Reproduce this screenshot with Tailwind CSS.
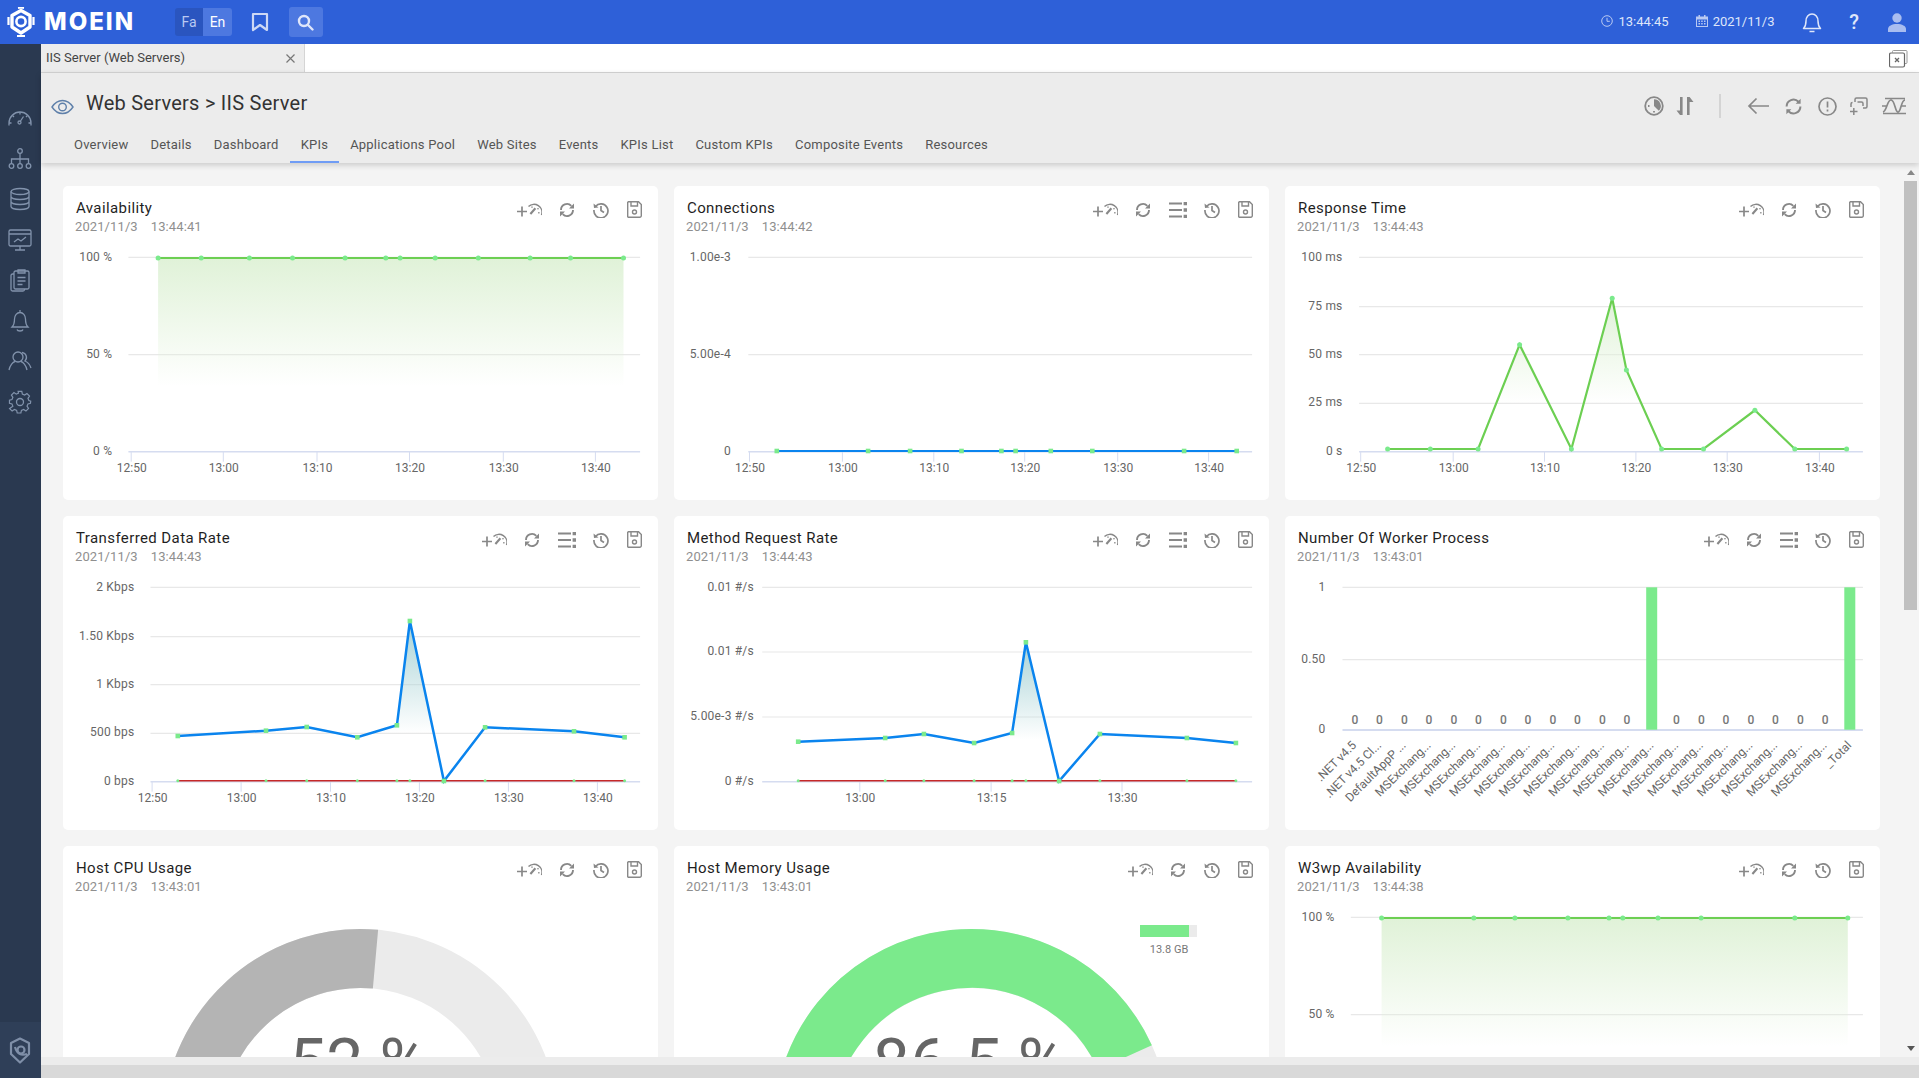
<!DOCTYPE html>
<html lang="en">
<head>
    <meta charset="UTF-8">
    <meta name="viewport" content="width=device-width, initial-scale=1.0">
    <title>Moein - IIS Server</title>
    <script src="https://cdn.jsdelivr.net/npm/@tailwindcss/browser@4"></script>
</head>
<body class="font-[Roboto,sans-serif] bg-[#f4f4f4] overflow-hidden">
<div class="h-screen flex flex-col overflow-hidden">

    <!-- Top bar -->
    <header class="h-[44px] shrink-0 bg-[#2e60d8] flex items-center pl-[7px] pr-[13px] text-[#dfe6fa]">
        <svg class="w-[28px] h-[30px] shrink-0" viewBox="0 0 28 30" fill="none" stroke="#fff">
            <path d="M14 3.5 23 8.5V20L14 26 5 20V8.5Z" stroke-width="3.4" stroke-linejoin="round"/>
            <circle cx="14" cy="14.5" r="4.6" stroke-width="2.6"/>
            <path d="M11 1 14 .5 17 1M1.5 10v8M26.5 10v8M10 29h8" stroke-width="2.2"/>
        </svg>
        <span class="ml-[9px] w-[92px] text-white font-[Inter,sans-serif] font-extrabold text-[24px] tracking-[2px] leading-none">MOEIN</span>
        <div class="ml-[39px] flex h-[28px] text-[14px] leading-[28px] text-center">
            <span class="w-[28px] bg-[#2a55bf] rounded-l-[3px] text-[#b9c9f2]">Fa</span>
            <span class="w-[29px] bg-[#4d78e0] rounded-r-[3px] text-white">En</span>
        </div>
        <svg class="ml-[19px] w-[18px] h-[20px]" viewBox="0 0 18 20" fill="none" stroke="#cdd8f5" stroke-width="2.2" stroke-linejoin="round"><path d="M2 2h14v16l-7-5-7 5z"/></svg>
        <div class="ml-[20px] w-[34px] h-[30px] bg-[#4d78e0] rounded-[3px] flex items-center justify-center pr-[2px]">
            <svg class="w-[17px] h-[17px]" viewBox="0 0 17 17" fill="none" stroke="#dfe6fa" stroke-width="2.4" stroke-linecap="round"><circle cx="7" cy="7" r="5"/><path d="M11 11l4.5 4.5"/></svg>
        </div>
        <div class="ml-auto flex items-center text-[13px]">
            <svg class="w-[12px] h-[12px] mr-[5px] -mt-[2px]" viewBox="0 0 12 12" fill="none" stroke="#b9c9f2" stroke-width="1"><circle cx="6" cy="6" r="5.3"/><path d="M6 2.8V6.300h2.800"/></svg>
            <span>13:44:45</span>
            <svg class="w-[12px] h-[12px] ml-[27px] mr-[5px] -mt-[2px]" viewBox="0 0 12 12" fill="#b9c9f2"><path d="M2.500 0h1.500v1.500H8V0h1.500v1.500H12V12H0V1.500h2.500zM1 4.500V11h10V4.500z"/><path d="M2.500 5.500h1.500V7H2.500zM5.200 5.500h1.500V7H5.200zM8 5.500h1.500V7H8zM2.500 8h1.500v1.500H2.500zM5.200 8h1.500v1.500H5.200zM8 8h1.500v1.500H8z"/></svg>
            <span>2021/11/3</span>
            <svg class="ml-[27px] w-[20px] h-[21px]" viewBox="0 0 20 21" fill="none" stroke="#dfe6fa" stroke-width="1.5"><path d="M1.500 16.500c2-2 2.500-3.500 2.500-7.500 0-4 2.500-7 6-7s6 3 6 7c0 4 .5 5.500 2.500 7.500z" stroke-linejoin="round"/><path d="M7.500 19.500h5"/></svg>
            <span class="ml-[26.500px] w-[12px] text-[20px] leading-none font-medium text-center text-[#dfe6fa]">?</span>
            <svg class="ml-[28px] w-[18px] h-[19px]" viewBox="0 0 18 19" fill="#a9bdf0"><circle cx="9" cy="5" r="4.700"/><path d="M0 19v-3c0-3 4-5 9-5s9 2 9 5v3z"/></svg>
        </div>
    </header>

    <div class="flex-1 min-h-0 flex">

        <!-- Side menu -->
        <aside class="w-[41px] shrink-0 bg-[#2a3950] flex flex-col">
            <div id="sideIcons" class="pt-[54px] pr-[1px] flex flex-col items-center"></div>
            <div class="mt-auto h-[56px] bg-[#2f3f58] flex items-center justify-center pr-[1px]">
                <svg class="w-[22px] h-[27px]" viewBox="0 0 22 27" fill="none" stroke="#7f8fa8" stroke-width="2.200"><path d="M2 6 11 1.500 20 6V17L11 25.500 2 17z" stroke-linejoin="round"/><circle cx="12" cy="13" r="3.500"/><path d="M6 10c2 7 6 9 12 7"/></svg>
            </div>
        </aside>

        <main class="flex-1 min-w-0 flex flex-col">
            <!-- Open tabs -->
            <div class="h-[29px] shrink-0 bg-white border-b border-[#d5d5d5] flex items-stretch">
                <div class="w-[264px] bg-[#ececec] border-r border-[#d5d5d5] flex items-center pl-[5px] pr-[9px] text-[13px] text-[#444]">
                    <span>IIS Server (Web Servers)</span>
                    <svg class="ml-auto w-[9px] h-[9px]" viewBox="0 0 9 9" stroke="#777" stroke-width="1.200"><path d="M.5.5l8 8M8.500.5l-8 8"/></svg>
                </div>
                <svg class="ml-auto mr-[11px] mt-[6px] w-[19px] h-[18px]" viewBox="0 0 19 18" fill="none" stroke="#666" stroke-width="1"><path d="M3.500 2.500V1.500a1 1 0 0 1 1-1H17a1 1 0 0 1 1 1v11a1 1 0 0 1-1 1h-1" stroke="#999"/><rect x=".5" y="3" width="15" height="14" rx="1.500" stroke-width="1.200"/><path d="M6 8l4 4M10 8l-4 4" stroke-width="1.300"/></svg>
            </div>

            <!-- Page head -->
            <div class="h-[90px] shrink-0 bg-[#ececec] shadow-[0_2px_6px_rgba(0,0,0,0.18)] relative z-10 flex flex-col">
                <div class="h-[59px] flex items-start pl-[10px] pr-[13px]">
                    <svg class="mt-[25px] w-[23px] h-[18px]" viewBox="0 0 23 18" fill="none" stroke="#5f80aa" stroke-width="1.400"><path d="M1 9c3-4.500 6.500-6.500 10.500-6.500S19 4.500 22 9c-3 4.500-6.500 6.500-10.500 6.500S4 13.500 1 9z"/><circle cx="11.500" cy="9" r="3.800"/></svg>
                    <span class="ml-[12px] mt-[16px] text-[20px] leading-[28px] text-[#333] tracking-[0.25px]">Web Servers &gt; IIS Server</span>
                    <div id="headIcons" class="ml-auto mt-[21px] flex items-center text-[#888]">
                        <svg class="w-[20px] h-[20px]" viewBox="0 0 20 20" fill="none" stroke="#888" stroke-width="1.800"><circle cx="10" cy="10" r="8.800"/><path d="M10 10V3.200A6.800 6.800 0 0 1 14.800 14.800z" fill="#888" stroke="none"/><path d="M4 10h1.500M10 15v1.500"/></svg>
                        <svg class="ml-[12px] w-[18px] h-[20px]" viewBox="0 0 18 20" fill="#888"><path d="M4 1h2.600v18H4L.500 14.500H4zM11 19V1h2.600L17.500 6H13.600V19z"/></svg>
                        <div class="ml-[25px] w-[2px] h-[24px] bg-[#d4d4d4]"></div>
                        <svg class="ml-[26px] w-[22px] h-[18px]" viewBox="0 0 22 18" fill="none" stroke="#888" stroke-width="1.700"><path d="M22 9H2M9.500 1.500 2 9l7.500 7.500"/></svg>
                        <svg class="ml-[15px] w-[19px] h-[19px]" viewBox="0 0 16 16" fill="none" stroke="#888" stroke-width="1.700"><path d="M2.200 8a5.800 5.800 0 0 1 10-4"/><path d="M13.800 8a5.800 5.800 0 0 1-10 4"/><path d="M14 1.500v4.200H9.800zM2 14.500v-4.200h4.200z" fill="#888" stroke="none"/></svg>
                        <svg class="ml-[15px] w-[19px] h-[19px]" viewBox="0 0 19 19" fill="none" stroke="#888" stroke-width="1.700"><circle cx="9.500" cy="9.500" r="8.500"/><path d="M9.500 4.500v6M9.500 12.500v2"/></svg>
                        <svg class="ml-[13px] w-[18px] h-[18px]" viewBox="0 0 18 18" fill="none" stroke="#888" stroke-width="1.500"><path d="M5 5V2.500A1.500 1.500 0 0 1 6.500 1h9A1.500 1.500 0 0 1 17 2.500v7a1.500 1.500 0 0 1-1.500 1.500H13"/><path d="M13 9V6.500A1.500 1.500 0 0 0 11.500 5H7.500M2.500 5.500A1.500 1.500 0 0 0 1 7v3"/><path d="M0 14.500h7.500M3.800 11v7"/></svg>
                        <svg class="ml-[14px] w-[24px] h-[18px]" viewBox="0 0 24 18" fill="none" stroke="#888" stroke-width="1.700"><path d="M1 16.500h23M3 1.500h20M0 9h5M19 9h5M1 15c4-1 4-12 8-12s4 12 7 12 3-12 7-12"/></svg>
                    </div>
                </div>
                <nav class="mt-auto pl-[22px] flex text-[13px] tracking-[0.22px] text-[#555]">
                    <span class="px-[11px] pt-[4px] pb-[7px] border-b-[2px] border-transparent">Overview</span>
                    <span class="px-[11px] pt-[4px] pb-[7px] border-b-[2px] border-transparent">Details</span>
                    <span class="px-[11px] pt-[4px] pb-[7px] border-b-[2px] border-transparent">Dashboard</span>
                    <span class="px-[11px] pt-[4px] pb-[7px] border-b-[2px] border-[#6f9cf5]">KPIs</span>
                    <span class="px-[11px] pt-[4px] pb-[7px] border-b-[2px] border-transparent">Applications Pool</span>
                    <span class="px-[11px] pt-[4px] pb-[7px] border-b-[2px] border-transparent">Web Sites</span>
                    <span class="px-[11px] pt-[4px] pb-[7px] border-b-[2px] border-transparent">Events</span>
                    <span class="px-[11px] pt-[4px] pb-[7px] border-b-[2px] border-transparent">KPIs List</span>
                    <span class="px-[11px] pt-[4px] pb-[7px] border-b-[2px] border-transparent">Custom KPIs</span>
                    <span class="px-[11px] pt-[4px] pb-[7px] border-b-[2px] border-transparent">Composite Events</span>
                    <span class="px-[11px] pt-[4px] pb-[7px] border-b-[2px] border-transparent">Resources</span>
                </nav>
            </div>

            <!-- KPI cards + scrollbar -->
            <div class="flex-1 min-h-0 flex">
                <div class="flex-1 min-w-0 overflow-hidden pt-[23px] px-[22px]">
                    <div id="cards" class="grid grid-cols-[595px_595px_595px] auto-rows-[314px] gap-[16px]"></div>
                </div>
                <div class="w-[17px] shrink-0 flex flex-col items-center">
                    <div class="h-[18px] flex items-center justify-center"><div class="w-0 h-0 border-x-[4px] border-x-transparent border-b-[5px] border-b-[#888]"></div></div>
                    <div class="w-[13px] h-[429px] bg-[#c0c0c0]"></div>
                    <div class="mt-auto h-[18px] flex items-center justify-center"><div class="w-0 h-0 border-x-[4px] border-x-transparent border-t-[5px] border-t-[#555]"></div></div>
                </div>
            </div>
            <div class="h-[8px] shrink-0 bg-[#ececec]"></div>
            <div class="h-[13px] shrink-0 bg-[#d9d9d9]"></div>
        </main>
    </div>
</div>

<script>
    // Side menu icons
    const sideIcons = [
        '<path d="M1 19.500V17A11 11 0 0 1 23 17v2.500"/><path d="M1 17h2.500M20.500 17H23M4.500 9.500 6 11M12 6v2.500M19.500 9.500 18 11M12.500 15l3-4.500"/><circle cx="11.500" cy="16.500" r="1.500"/>',
        '<circle cx="12" cy="4" r="2.300"/><circle cx="3.500" cy="19" r="2.300"/><circle cx="12" cy="19" r="2.300"/><circle cx="20.500" cy="19" r="2.300"/><path d="M12 6.300V16.700M3.500 16.700V12h17v4.700"/>',
        '<ellipse cx="12" cy="4.500" rx="9" ry="3"/><path d="M3 4.500v15c0 1.700 4 3 9 3s9-1.300 9-3v-15M3 9.500c0 1.700 4 3 9 3s9-1.300 9-3M3 14.500c0 1.700 4 3 9 3s9-1.300 9-3"/>',
        '<rect x="1" y="2" width="22" height="16" rx="1.500"/><path d="M1 6h22M12 18v4M7 22h10M6 14l4-3 3 2 5-4"/>',
        '<rect x="6" y="3" width="15" height="18" rx="1.500"/><path d="M6 6H4.500A1.500 1.500 0 0 0 3 7.500v14A1.500 1.500 0 0 0 4.500 23H15a1.500 1.500 0 0 0 1.500-1.500V21M10 2h7v3h-7zM9.500 9.500h8M9.500 13h8M9.500 16.500h5"/>',
        '<path d="M4 18c2-2 2.500-4 2.500-8 0-3.500 2.500-6.500 5.500-6.500s5.500 3 5.500 6.500c0 4 .5 6 2.500 8zM12 1v2.500M9 20.500c.5 2 5.500 2 6 0"/>',
        '<circle cx="10" cy="8" r="5"/><path d="M1 21c1-5 4-8 6-8.500M13 12.500c2 .5 5 3.500 6 8.500"/><path d="M14 3.500a5 5 0 0 1 3 8.500c2.500 1 5 4 6 7"/>',
        '<circle cx="12" cy="12" r="3.500"/><path d="M10 2h4l.6 3 2.500 1 2.500-1.700 2.800 2.800L20.700 9.600l1 2.400 2 .6-.3 2.400-2.700.6-1 2.500 1.600 2.500-2.800 2.800-2.500-1.700-2.400 1-.6 2.800h-4l-.6-2.800-2.400-1-2.500 1.700-2.800-2.800L4.300 18.100l-1-2.500-2.700-.6V11.500l2.700-.6 1-2.400L2.700 6.100 5.500 3.300 8 5l2.400-1z" transform="scale(.92) translate(1 -.5)"/>'
    ];
    document.getElementById("sideIcons").innerHTML = sideIcons.map(p =>
        `<div class="h-[40.500px] flex items-center justify-center"><svg class="w-[24px] h-[24px]" viewBox="0 0 24 24" fill="none" stroke="#8293ac" stroke-width="1.300">${p}</svg></div>`
    ).join("");

    // Card header icons
    const gaugeIcon = `<svg class="w-[25px] h-[15px] -mr-[1px]" viewBox="0 0 25 15" fill="none" stroke="#888" stroke-width="1.700"><path d="M0 9.500h10M5 4.500v10"/><path d="M11.500 4.500A8 8 0 0 1 24.500 13" stroke-width="1.500"/><path d="M13.400 12 18.400 6.300" stroke-width="2.100"/><path d="M15 4.500v1.200M21.500 6.300l-1 .8M22.500 10.800h-1.300" stroke-width="1.400"/></svg>`;
    const refreshIcon = `<svg class="w-[16px] h-[16px]" viewBox="0 0 16 16" fill="none" stroke="#888" stroke-width="1.900"><path d="M2 8a6 6 0 0 1 10.300-4.200"/><path d="M14 8a6 6 0 0 1-10.300 4.200"/><path d="M15 1.500v5H10zM1 14.500v-5H6z" fill="#888" stroke="none"/></svg>`;
    const listIcon = `<svg class="w-[18px] h-[16px] -mr-[1px]" viewBox="0 0 18 16" fill="none" stroke="#888" stroke-width="1.800"><path d="M0 1.500h13M0 8h13M0 14.500h13M15.500 0.600H18v1.800h-2.500zM15.500 7.100H18v1.800h-2.500zM15.500 13.600H18v1.800h-2.500z"/></svg>`;
    const historyIcon = `<svg class="w-[16px] h-[16px]" viewBox="0 0 16 16" fill="none" stroke="#888" stroke-width="1.700"><path d="M2.500 4.500A7 7 0 1 1 1 8"/><path d="M.5 1.500l.5 4.500 4.500-.5z" fill="#888" stroke="none"/><path d="M8 4v4.500l3 2"/></svg>`;
    const saveIcon = `<svg class="w-[15px] h-[17px]" viewBox="0 0 15 17" fill="none" stroke="#888" stroke-width="1.400"><path d="M1.500.7h10L14.300 3.500v11.300a1.500 1.500 0 0 1-1.500 1.500H1.500A1 1 0 0 1 .7 15V1.500A1 1 0 0 1 1.500.7z"/><path d="M4 1v4h6.500V1"/><circle cx="7.500" cy="11" r="2"/></svg>`;

    // Points are measured on the reference crops: x scale 2.529, y scale 3
    const GREEN = "#6ccf52", BLUE = "#0a84ee", RED = "#c62828", DOT = "#7bea8c", AREA = "#e0f2d8";
    const TIMES = ["12:50", "13:00", "13:10", "13:20", "13:30", "13:40"];

    function lineChart(c, id) {
        const X = z => +((z - c.o) / 2.529).toFixed(1);
        const Y = z => +((z - 18) / 3 - 58).toFixed(1);
        let s = `<svg class="block" width="595" height="256" viewBox="0 0 595 256">`;
        c.grid.forEach((g, i) => {
            s += `<line x1="${X(c.gx[0])}" x2="${X(c.gx[1])}" y1="${Y(g)}" y2="${Y(g)}" stroke="${i == c.grid.length - 1 ? "#d5dcf0" : "#e8e8e8"}" stroke-width="${i == c.grid.length - 1 ? 1.5 : 1.2}"/>`;
            s += `<text x="${X(c.lx)}" y="${Y(g) + (i == 0 ? 4 : 3)}" text-anchor="end" font-size="12" letter-spacing="0.2" fill="#666">${c.labels[i]}</text>`;
        });
        c.ticks.forEach((t, i) => {
            const base = Y(815);
            s += `<line x1="${X(t)}" x2="${X(t)}" y1="${base}" y2="${base + 10}" stroke="#d5dcf0"/>`;
            s += `<text x="${X(t) + 0.5}" y="${Y(863) + 4}" text-anchor="middle" font-size="12" fill="#666">${(c.times || TIMES)[i]}</text>`;
        });
        const pts = c.pts.map(p => `${X(p[0])},${Y(p[1])}`).join(" ");
        const first = c.pts[0][0], last = c.pts[c.pts.length - 1][0];
        s += `<defs><linearGradient id="area${id}" gradientUnits="userSpaceOnUse" x1="0" x2="0" y1="${Y(c.fade[0])}" y2="${Y(c.fade[1])}"><stop offset="0" stop-color="${c.fill}"/><stop offset="1" stop-color="${c.fill}" stop-opacity="0"/></linearGradient></defs>`;
        s += `<polygon points="${X(first)},${Y(815)} ${pts} ${X(last)},${Y(815)}" fill="url(#area${id})"/>`;
        if (c.red) {
            s += `<line x1="${X(first)}" x2="${X(last)}" y1="${Y(812)}" y2="${Y(812)}" stroke="${RED}" stroke-width="1.500"/>`;
            c.pts.forEach(p => s += `<circle cx="${X(p[0])}" cy="${Y(812)}" r="1.500" fill="${DOT}"/>`);
        }
        s += `<polyline points="${pts}" fill="none" stroke="${c.color}" stroke-width="${c.width || 2.200}"/>`;
        c.pts.forEach(p => {
            s += c.square
                ? `<rect x="${X(p[0]) - 2.300}" y="${Y(p[1]) - 2.300}" width="4.600" height="4.600" fill="${DOT}"/>`
                : `<circle cx="${X(p[0])}" cy="${Y(p[1])}" r="2.500" fill="${DOT}"/>`;
        });
        return s + `</svg>`;
    }

    function barChart() {
        const o = 12.6;
        const X = z => +((z - o) / 2.529).toFixed(1);
        const Y = z => +((z - 18) / 3 - 58).toFixed(1);
        const names = [".NET v4.5", ".NET v4.5 Cl...", "DefaultAppP ..."];
        for (let i = 0; i < 17; i++) names.push("MSExchang...");
        names.push("_Total");
        let s = `<svg class="block" width="595" height="256" viewBox="0 0 595 256">`;
        [[232, "1"], [449, "0.50"], [660, "0"]].forEach((g, i) => {
            s += `<line x1="${X(158)}" x2="${X(1474)}" y1="${Y(g[0])}" y2="${Y(g[0])}" stroke="${i == 2 ? "#d5dcf0" : "#e8e8e8"}" stroke-width="${i == 2 ? 2 : 1.200}"/>`;
            s += `<text x="${X(115)}" y="${Y(g[0]) + (i == 0 ? 4 : 3)}" text-anchor="end" font-size="12" letter-spacing="0.2" fill="#666">${g[1]}</text>`;
        });
        names.forEach((n, i) => {
            const cx = 189 + i * 62.600;
            if (i == 12 || i == 20) {
                s += `<rect x="${X(cx - 14)}" y="${Y(232)}" width="11" height="${Y(659) - Y(232)}" fill="${DOT}"/>`;
            } else {
                s += `<text x="${X(cx)}" y="${Y(627) + 5}" text-anchor="middle" font-size="12" font-weight="500" fill="#777">0</text>`;
            }
            const tx = X(cx + 6), ty = Y(708);
            s += `<text x="${tx}" y="${ty}" transform="rotate(-45 ${tx} ${ty})" text-anchor="end" font-size="12" fill="#666">${n}</text>`;
        });
        return s + `</svg>`;
    }

    function gaugeChart(c) {
        const cx = 297.500, cy = 223, r = 168.500;
        const a = c.angle * Math.PI / 180;
        const ex = (cx + r * Math.sin(a)).toFixed(1), ey = (cy - r * Math.cos(a)).toFixed(1);
        let s = `<svg class="block" width="595" height="256" viewBox="0 0 595 256">`;
        s += `<circle cx="${cx}" cy="${cy}" r="${r}" fill="none" stroke="#ebebeb" stroke-width="59"/>`;
        s += `<path d="M${cx - r} ${cy}A${r} ${r} 0 0 1 ${ex} ${ey}" fill="none" stroke="${c.color}" stroke-width="59"/>`;
        s += `<text x="295.500" y="182" text-anchor="middle" font-size="66" fill="#666">${c.text}</text>`;
        if (c.legend) {
            s += `<rect x="466" y="21" width="57" height="12" fill="#ebebeb"/><rect x="466" y="21" width="49" height="12" fill="${DOT}"/>`;
            s += `<text x="495" y="49" text-anchor="middle" font-size="11" fill="#777">${c.legend}</text>`;
        }
        return s + `</svg>`;
    }

    const full = xs => xs.map(x => [x, 234]);
    const cards = [
        { title: "Availability", time: "13:44:41", list: false, chart: () => lineChart({ o: 7.6, grid: [232, 524, 815], gx: [173, 1467], lx: 132, labels: ["100 %", "50 %", "0 %"], ticks: [180, 413, 650, 884, 1121, 1354], pts: full([248, 357, 479, 588, 721, 824, 860, 949, 1058, 1189, 1291, 1425]), color: GREEN, fill: AREA, fade: [235, 620] }, 1) },
        { title: "Connections", time: "13:44:42", list: true, chart: () => lineChart({ o: 10, grid: [232, 524, 815], gx: [198, 1472], lx: 154, labels: ["1.00e-3", "5.00e-4", "0"], ticks: [201, 436, 667, 897, 1132, 1362], pts: [270, 501, 607, 737, 838, 874, 963, 1068, 1300, 1433].map(x => [x, 813]), color: BLUE, fill: "#ffffff", fade: [800, 815], square: true, width: 2 }, 2) },
        { title: "Response Time", time: "13:44:43", list: false, chart: () => lineChart({ o: 12.6, grid: [232, 380, 524, 670, 815], gx: [200, 1474], lx: 158, labels: ["100 ms", "75 ms", "50 ms", "25 ms", "0 s"], ticks: [204, 438, 669, 900, 1131, 1364], pts: [[272, 807], [380, 807], [501, 807], [606, 494], [737, 807], [840, 355], [876, 570], [965, 807], [1071, 807], [1201, 691], [1302, 807], [1433, 807]], color: GREEN, fill: AREA, fade: [355, 670] }, 3) },
        { title: "Transferred Data Rate", time: "13:44:43", list: true, chart: () => lineChart({ o: 7.6, grid: [232, 380, 524, 670, 815], gx: [229, 1467], lx: 188, labels: ["2 Kbps", "1.50 Kbps", "1 Kbps", "500 bps", "0 bps"], ticks: [233, 458, 684, 909, 1134, 1359], pts: [[298, 678], [521, 662], [624, 651], [752, 682], [852, 646], [885, 333], [971, 813], [1075, 652], [1300, 664], [1428, 682]], color: BLUE, fill: "#a9d3d6", fade: [333, 670], square: true, red: true, width: 2.500 }, 4) },
        { title: "Method Request Rate", time: "13:44:43", list: true, chart: () => lineChart({ o: 10, grid: [232, 426, 621, 815], gx: [233, 1472], lx: 212, labels: ["0.01 #/s", "0.01 #/s", "5.00e-3 #/s", "0 #/s"], ticks: [480, 812, 1143], times: ["13:00", "13:15", "13:30"], pts: [[324, 695], [544, 684], [642, 672], [769, 699], [865, 669], [900, 397], [984, 813], [1087, 672], [1307, 684], [1431, 699]], color: BLUE, fill: "#a9d3d6", fade: [397, 690], square: true, red: true, width: 2.500 }, 5) },
        { title: "Number Of Worker Process", time: "13:43:01", list: true, chart: barChart },
        { title: "Host CPU Usage", time: "13:43:01", list: false, chart: () => gaugeChart({ angle: 5.1, color: "#b4b4b4", text: "52 %" }) },
        { title: "Host Memory Usage", time: "13:43:01", list: false, chart: () => gaugeChart({ angle: 65.6, color: DOT, text: "86.5 %", legend: "13.8 GB" }) },
        { title: "W3wp Availability", time: "13:44:38", list: false, chart: () => lineChart({ o: 12.6, grid: [232, 524, 815], gx: [179, 1474], lx: 138, labels: ["100 %", "50 %", "0 %"], ticks: [], pts: full([257, 490, 594, 728, 832, 867, 956, 1065, 1302, 1436]), color: GREEN, fill: AREA, fade: [235, 620] }, 9) }
    ];

    document.getElementById("cards").innerHTML = cards.map(c => `
        <div class="bg-white rounded-[5px] overflow-hidden">
            <div class="h-[58px] flex items-start pl-[13px] pr-[16px] pt-[13px]">
                <div>
                    <div class="text-[15px] leading-[18px] tracking-[0.4px] text-[#1f1f1f]">${c.title}</div>
                    <div class="-ml-[1px] mt-[1px] text-[13px] leading-[18px] tracking-[0.1px] text-[#8f8f8f]">2021/11/3<span class="ml-[13px]">${c.time}</span></div>
                </div>
                <div class="ml-auto h-[20px] flex items-center gap-[18px] pt-[1px]">
                    ${gaugeIcon}${refreshIcon}${c.list ? listIcon : ""}${historyIcon}${saveIcon}
                </div>
            </div>
            ${c.chart()}
        </div>`).join("");
</script>
</body>
</html>
